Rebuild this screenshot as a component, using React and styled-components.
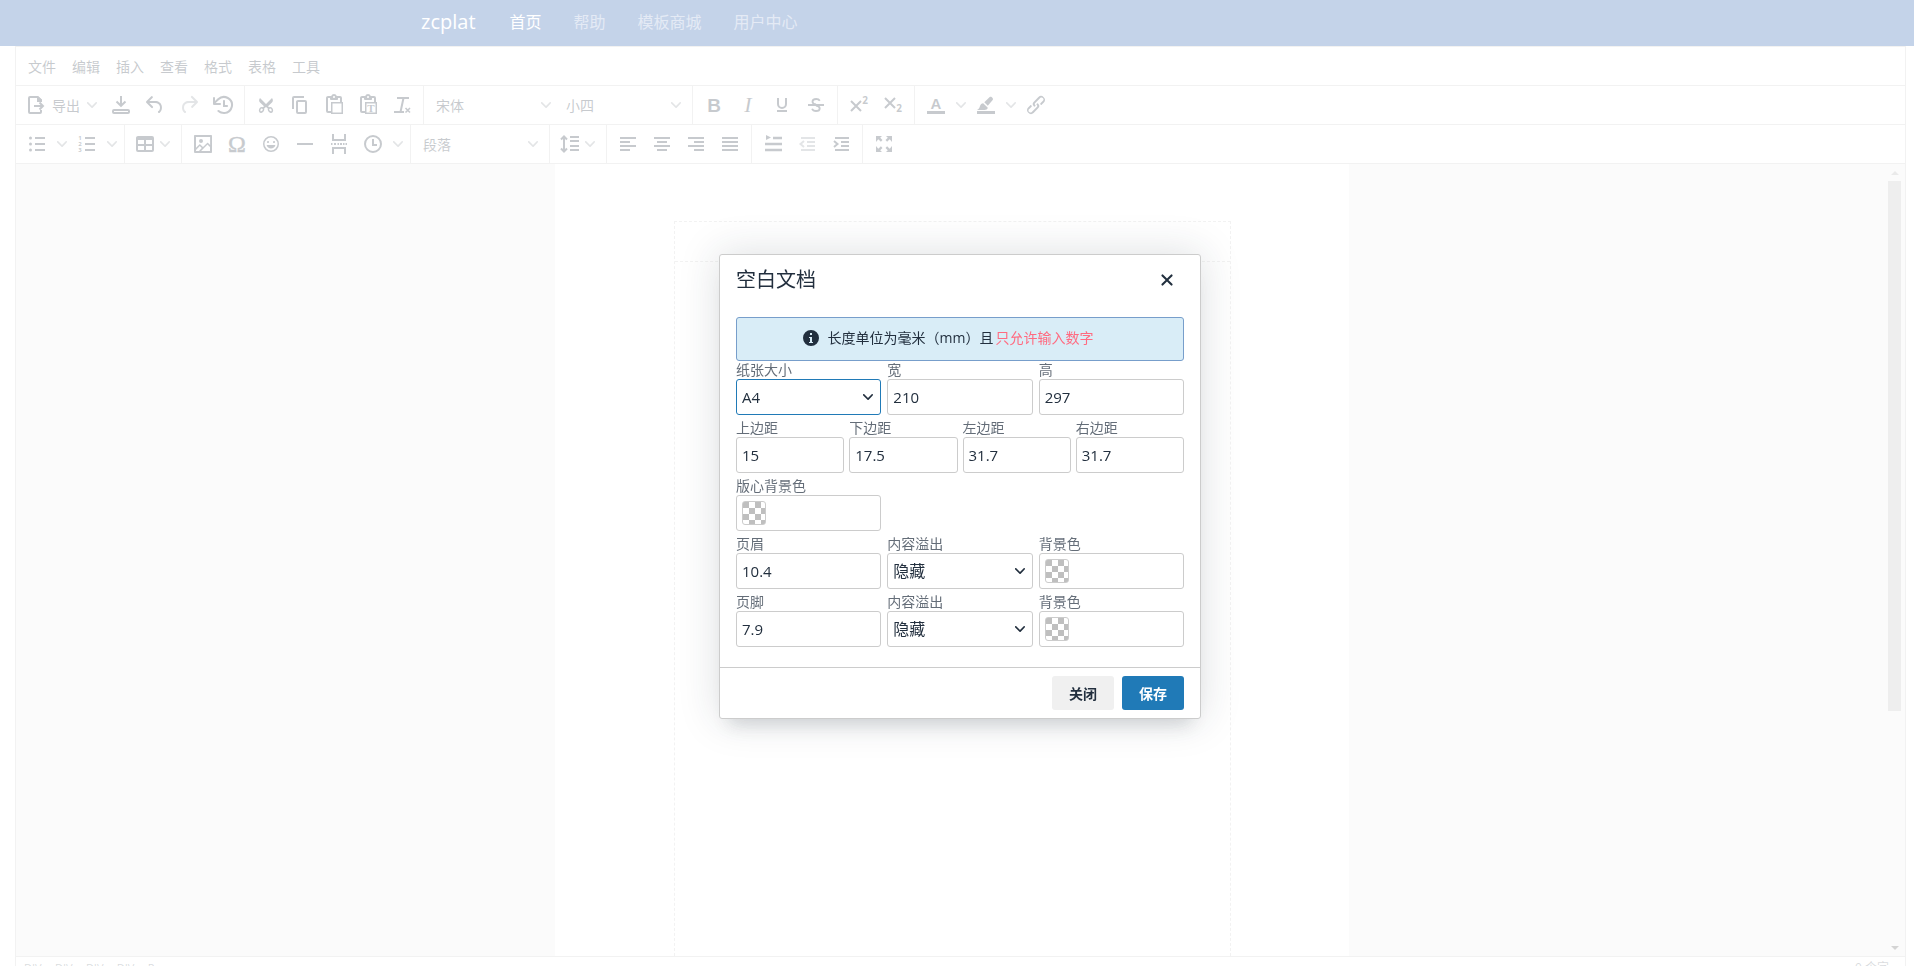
import styled, { createGlobalStyle, css } from 'styled-components';

const ink = '#222f3e';
const line = '#ccc';
const accent = '#207ab7';
const fontStack = "'Open Sans', 'Noto Sans CJK SC', sans-serif";

const GlobalStyle = createGlobalStyle`
  * {
    box-sizing: border-box;
  }
  body {
    margin: 0;
    overflow: hidden;
    background: #fff;
    color: ${ink};
    font-family: ${fontStack};
    font-size: 14px;
    line-height: 18px;
  }
  button,
  input,
  select {
    font-family: inherit;
    color: inherit;
    margin: 0;
  }
`;

const Page = styled.div`
  height: 100vh;
  overflow: hidden;
`;

const Navbar = styled.header`
  display: flex;
  align-items: center;
  height: 46px;
  padding: 0 0 2px 22%;
  background: #174fa7;
`;

const Brand = styled.a`
  margin-right: 18px;
  color: #fff;
  font-size: 20px;
  line-height: 30px;
  text-decoration: none;
`;

const NavLink = styled.a`
  padding: 0 16px;
  color: ${(props) => (props.$active ? '#fff' : 'rgba(255, 255, 255, 0.55)')};
  font-size: 16px;
  line-height: 24px;
  text-decoration: none;
`;

const Editor = styled.main`
  display: flex;
  flex-direction: column;
  height: calc(100vh - 30px);
  margin: 0 8px 0 15px;
  border: 1px solid ${line};
`;

const Menubar = styled.nav`
  display: flex;
  align-items: center;
  height: 38px;
  padding: 0 4px;
`;

const MenuButton = styled.button`
  height: 34px;
  padding: 0 8px;
  border: 0;
  background: none;
  font-size: 14px;
`;

const Toolbar = styled.div`
  display: flex;
  height: 39px;
  border-top: 1px solid ${line};
`;

const Group = styled.div`
  display: flex;
  align-items: center;
  padding: 0 4px;

  & + & {
    border-left: 1px solid ${line};
  }
`;

const ToolButton = styled.button`
  display: flex;
  align-items: center;
  justify-content: center;
  width: 34px;
  height: 34px;
  padding: 0;
  border: 0;
  background: none;
  font-size: 14px;

  &:disabled {
    color: rgba(34, 47, 62, 0.5);
  }
`;

const ArrowButton = styled(ToolButton)`
  width: 16px;
`;

const MenuToolButton = styled(ToolButton)`
  width: auto;
  padding: 0 4px;
`;

const ButtonText = styled.span`
  margin: 0 4px;
`;

const Arrow = styled.span`
  display: flex;
  justify-content: center;
  width: 16px;
  opacity: 0.5;
`;

const ToolSelectBox = styled.span`
  display: grid;
  grid-template-columns: 1fr 24px;
  align-items: center;
  width: 130px;
  height: 34px;

  select {
    grid-area: 1 / 1 / 2 / 3;
    height: 34px;
    padding: 0 8px;
    border: 0;
    background: none;
    appearance: none;
    font-size: 14px;
  }
  svg {
    grid-area: 1 / 2;
    justify-self: center;
    opacity: 0.5;
    pointer-events: none;
  }
`;

const Canvas = styled.section`
  display: flex;
  flex: 1;
  min-height: 0;
  border-top: 1px solid ${line};
  background: #f0f0f0;
`;

const PageArea = styled.div`
  display: flex;
  flex: 1;
  justify-content: center;
  overflow: hidden;
`;

const Sheet = styled.article`
  width: 794px;
  padding: 57px 118px 0 119px;
  background: #fff;
`;

const Margins = styled.div`
  height: 100%;
  border: 1px dashed ${line};
  border-bottom: 0;
`;

const PageHeader = styled.div`
  height: 40px;
  border-bottom: 1px dashed ${line};
`;

const Scrollbar = styled.div`
  display: flex;
  flex-direction: column;
  align-items: center;
  justify-content: space-between;
  width: 17px;
  padding: 7px 4px 6px 0;
`;

const Thumb = styled.div`
  width: 13px;
  height: 68%;
  margin: 6px 0 auto;
  background: #bbb;
`;

const ScrollArrow = styled.span`
  width: 0;
  height: 0;
  border: 4px solid transparent;
  border-top-width: ${(props) => (props.$up ? 0 : 4)}px;
  border-bottom-width: ${(props) => (props.$up ? 4 : 0)}px;
  border-${(props) => (props.$up ? 'bottom' : 'top')}-color: ${(props) =>
    props.$up ? '#aaa' : '#555'};
`;

const Statusbar = styled.footer`
  display: flex;
  justify-content: space-between;
  height: 25px;
  padding: 2px 16px 0 8px;
  border-top: 1px solid ${line};
  color: rgba(34, 47, 62, 0.7);
  font-size: 12px;
`;

const Path = styled.span`
  display: flex;
  gap: 5px;
  font-size: 11px;
`;

const Backdrop = styled.div`
  position: fixed;
  inset: 0;
  display: flex;
  align-items: center;
  justify-content: center;
  padding: 7px 0 0 6px;
  background: rgba(255, 255, 255, 0.75);
`;

const Dialog = styled.form`
  width: 482px;
  max-width: 95%;
  border: 1px solid ${line};
  border-radius: 3px;
  background: #fff;
  box-shadow:
    0 16px 16px -10px rgba(34, 47, 62, 0.15),
    0 0 40px 1px rgba(34, 47, 62, 0.15);
`;

const DialogHeader = styled.div`
  display: flex;
  align-items: center;
  justify-content: space-between;
  padding: 8px 16px 0;
`;

const DialogTitle = styled.h1`
  margin: 0;
  font-size: 20px;
  font-weight: 400;
  line-height: 26px;
`;

const DialogBody = styled.div`
  padding: 20px 16px;
`;

const Notice = styled.p`
  display: flex;
  align-items: center;
  justify-content: center;
  height: 44px;
  margin: 0;
  padding: 0 28px 2px 0;
  border: 1px solid #779ecb;
  border-radius: 3px;
  background: #d9edf7;

  svg {
    margin-right: 5px;
  }
`;

const Warning = styled.span`
  margin-left: 2px;
  color: #ff6b81;
`;

const Row = styled.div`
  display: grid;
  grid-template-columns: repeat(${(props) => props.$cols}, 1fr);
  gap: ${(props) => (props.$cols === 4 ? 5 : 6)}px;

  & + & {
    margin-top: 4px;
  }
`;

const FieldBox = styled.div`
  display: flex;
  flex-direction: column;
  min-width: 0;
`;

const Label = styled.label`
  color: rgba(34, 47, 62, 0.7);
  line-height: 18px;
  white-space: nowrap;
`;

const control = css`
  width: 100%;
  height: 36px;
  padding: 0 5px;
  border: 1px solid ${line};
  border-radius: 3px;
  outline: 0;
  background: #fff;
  font-size: 15px;
  line-height: 24px;
`;

const TextInput = styled.input`
  ${control}
`;

const SelectInput = styled.select`
  ${control}
  border-color: ${(props) => (props.$focused ? accent : line)};
  appearance: none;
  font-size: ${(props) => (props.$cjk ? 16 : 15)}px;
`;

const ControlWrap = styled.div`
  position: relative;
  display: flex;
  align-items: center;

  > svg {
    position: absolute;
    right: 8px;
    pointer-events: none;
  }
`;

const Swatch = styled.span`
  position: absolute;
  left: 6px;
  width: 24px;
  height: 24px;
  border: 1px solid ${line};
  border-radius: 3px;
  background: repeating-conic-gradient(#fff 0 25%, #bfbfbf 0 50%) 0 0 / 12px 12px;
`;

const DialogFooter = styled.div`
  display: flex;
  justify-content: flex-end;
  gap: 8px;
  padding: 8px 16px;
  border-top: 1px solid ${line};
`;

const Button = styled.button`
  height: 34px;
  padding: 0 17px;
  border: 0;
  border-radius: 3px;
  background: ${(props) => (props.$primary ? accent : '#f0f0f0')};
  color: ${(props) => (props.$primary ? '#fff' : ink)};
  font-size: 14px;
  font-weight: 700;
`;

const Svg = ({ size = 24, children }) => (
  <svg
    width={size}
    height={size}
    viewBox={`0 0 ${size} ${size}`}
    fill="currentColor"
    fillRule="evenodd"
    aria-hidden="true"
  >
    {children}
  </svg>
);

const Stroke = ({ d, width = 2, ...rest }) => (
  <path d={d} fill="none" stroke="currentColor" strokeWidth={width} {...rest} />
);

const Glyph = ({ family = 'Open Sans', ...rest }) => (
  <text textAnchor="middle" fontFamily={family} {...rest} />
);

const Chevron = () => (
  <Svg size={10}>
    <path d="M8.7 2.2c.3-.3.8-.3 1 0 .4.4.4.9 0 1.2L5.7 7.8c-.3.3-.9.3-1.2 0L.2 3.4a.8.8 0 0 1 0-1.2c.3-.3.8-.3 1.1 0L5 6l3.7-3.8Z" />
  </Svg>
);

const clipboard =
  'M18 9V5h-2v1c0 .6-.4 1-1 1H9a1 1 0 0 1-1-1V5H6v13h3V9h9ZM9 20H6a2 2 0 0 1-2-2V5c0-1.1.9-2 2-2h3.2A3 3 0 0 1 12 1a3 3 0 0 1 2.8 2H18a2 2 0 0 1 2 2v4h1v12H9v-1Zm1.5-9.5v9h9v-9h-9ZM12 3a1 1 0 0 0-1 1c0 .5.4 1 1 1s1-.5 1-1-.4-1-1-1Z';

const icons = {
  export: (
    <>
      <Stroke d="M17 9V7l-3.5-3H6a1 1 0 0 0-1 1v14a1 1 0 0 0 1 1h10a1 1 0 0 0 1-1v-2" />
      <path d="M13 3h1l4 4v2h-5V3Z" />
      <Stroke d="M10 13h8M15.5 9.500 19 13l-3.500 3.500" />
    </>
  ),
  download: (
    <>
      <Stroke d="M12 3v9M7.500 8.500 12 12.800l4.500-4.300" />
      <Stroke d="M5 17h14a1 1 0 0 1 1 1v1a1 1 0 0 1-1 1H5a1 1 0 0 1-1-1v-1a1 1 0 0 1 1-1Z" />
    </>
  ),
  undo: (
    <path d="M6.4 8H12c3.7 0 6.2 2 6.8 5.1.6 2.7-.4 5.6-2.3 6.8a1 1 0 0 1-1-1.8c1.1-.6 1.8-2.7 1.4-4.6-.5-2.1-2.1-3.5-4.9-3.5H6.4l3.3 3.3a1 1 0 1 1-1.4 1.4l-5-5a1 1 0 0 1 0-1.4l5-5a1 1 0 0 1 1.4 1.4L6.4 8Z" />
  ),
  redo: (
    <path d="M17.6 10H12c-2.8 0-4.4 1.4-4.9 3.5-.4 2 .3 4 1.4 4.6a1 1 0 1 1-1 1.8c-2-1.2-2.9-4.1-2.3-6.8.6-3 3-5.1 6.8-5.1h5.6l-3.3-3.3a1 1 0 1 1 1.4-1.4l5 5a1 1 0 0 1 0 1.4l-5 5a1 1 0 0 1-1.4-1.4l3.3-3.3Z" />
  ),
  history: (
    <>
      <path d="M17 13c0 .6-.4 1-1 1h-4V8c0-.6.4-1 1-1s1 .4 1 1v4h2c.6 0 1 .4 1 1Z" />
      <path d="M4.7 10H9a1 1 0 0 1 0 2H3a1 1 0 0 1-1-1V5a1 1 0 1 1 2 0v3l2.5-2.4a9.2 9.2 0 0 1 10.8-1.5A9 9 0 0 1 13.4 21c-2.4.1-4.7-.7-6.5-2.2a1 1 0 1 1 1.3-1.5 7.2 7.2 0 0 0 11.6-3.7 7 7 0 0 0-3.5-7.7A7.2 7.2 0 0 0 8 7L4.7 10Z" />
    </>
  ),
  cut: (
    <>
      <path d="M6 5l6 6 6-6c1.200 1.500 1.200 3 0 4.500l-4 3.800 2 1.700-1.300 1.300L12 14l-2.700 2.300L8 15l2-1.700-4-3.800C4.800 8 4.800 6.500 6 5Z" />
      <Stroke
        width={1.5}
        d="M7.700 14.700c1.600 0 2.300 1.200 1.600 2.700-.8 1.500-2.600 2.200-3.300 1.300-1-1.300 0-4 1.700-4ZM16.300 14.700c-1.600 0-2.300 1.200-1.600 2.700.8 1.500 2.600 2.200 3.300 1.300 1-1.300 0-4-1.700-4Z"
      />
    </>
  ),
  copy: (
    <path d="M16 3H6a2 2 0 0 0-2 2v11h2V5h10V3Zm1 4a2 2 0 0 1 2 2v10a2 2 0 0 1-2 2h-7a2 2 0 0 1-2-2V9c0-1.2.9-2 2-2h7Zm0 12V9h-7v10h7Z" />
  ),
  paste: <path d={clipboard} />,
  pasteText: (
    <>
      <path d={clipboard} />
      <Glyph x="15" y="19" fontSize="11" fontWeight="700" family="Liberation Serif">
        T
      </Glyph>
    </>
  ),
  clear: (
    <>
      <Stroke d="M7 5h12M13.500 5l-3 14M4 19h10" />
      <Stroke width={1.6} d="m15.500 15 4.500 4.500m0-4.500-4.500 4.500" />
    </>
  ),
  bold: (
    <Glyph x="12" y="19" fontSize="19" fontWeight="700" family="Liberation Sans">
      B
    </Glyph>
  ),
  italic: (
    <Glyph x="12" y="19" fontSize="22" fontStyle="italic" family="Liberation Serif">
      I
    </Glyph>
  ),
  underline: <Stroke d="M8 5v6a4 4 0 0 0 8 0V5M7 18h10" />,
  strike: (
    <>
      <Stroke
        width={1.8}
        d="M15.800 7.800C15 6.500 13.800 6 12.200 6 10 6 8.500 7 8.500 8.700c0 1.500 1.200 2.300 3.500 2.800M12 12.500c2.500.6 3.700 1.300 3.700 2.900 0 1.700-1.500 2.600-3.700 2.600-2 0-3.300-.7-3.900-2.300"
      />
      <Stroke d="M4 12h16" />
    </>
  ),
  superscript: (
    <>
      <Stroke d="m4 8 10 10M14 8 4 18" />
      <Glyph x="18" y="11" fontSize="10" fontWeight="700">
        2
      </Glyph>
    </>
  ),
  subscript: (
    <>
      <Stroke d="m4 5 10 10M14 5 4 15" />
      <Glyph x="18" y="19" fontSize="10" fontWeight="700">
        2
      </Glyph>
    </>
  ),
  textColor: (
    <>
      <path d="M3 18h18v3H3z" />
      <Glyph x="12" y="16" fontSize="15" fontWeight="700" family="Liberation Sans">
        A
      </Glyph>
    </>
  ),
  highlight: (
    <>
      <path d="M3 18h18v3H3z" />
      <path d="M3 17c2-1 2.500-2.200 3-4 .4-1.700 1.600-2.800 3.200-2.800l4.600 4.600c-.2 1.400-1.800 2.200-3.300 2.200H3ZM10.300 9.300l5.400-5.200c1.300-1.200 4.300 1.300 3 3l-4.900 5.600-3.500-3.400Z" />
    </>
  ),
  link: (
    <path d="M6.200 12.300a1 1 0 0 1 1.400 1.400l-2 2a2 2 0 1 0 2.600 2.800l4.800-4.800a1 1 0 0 0 0-1.400 1 1 0 1 1 1.400-1.300 2.900 2.900 0 0 1 0 4L9.600 20a3.900 3.900 0 0 1-5.500-5.500l2-2Zm11.600-.6a1 1 0 0 1-1.400-1.400l2-2a2 2 0 1 0-2.600-2.800L11 10.300a1 1 0 0 0 0 1.400A1 1 0 1 1 9.600 13a2.900 2.900 0 0 1 0-4L14.400 4a3.900 3.900 0 0 1 5.500 5.500l-2 2Z" />
  ),
  bullets: (
    <>
      <Stroke d="M10 6h10M10 12h10M10 18h10" />
      <circle cx="5.500" cy="6" r="1.500" />
      <circle cx="5.500" cy="12" r="1.500" />
      <circle cx="5.500" cy="18" r="1.500" />
    </>
  ),
  numbers: (
    <>
      <Stroke d="M10 6h10M10 12h10M10 18h10" />
      {[1, 2, 3].map((n) => (
        <Glyph key={n} x="5" y={n * 6 + 2} fontSize="6" fontWeight="700">
          {n}
        </Glyph>
      ))}
    </>
  ),
  table: (
    <path d="M19 4a2 2 0 0 1 2 2v12a2 2 0 0 1-2 2H5a2 2 0 0 1-2-2V6c0-1.1.9-2 2-2h14ZM5 14v4h6v-4H5Zm14 0h-6v4h6v-4Zm0-6h-6v4h6V8ZM5 12h6V8H5v4Z" />
  ),
  image: (
    <path d="m5 15.7 3.3-3.2c.3-.3.7-.3 1 0L12 15l4.1-4c.3-.4.8-.4 1 0l2 1.900V5H5v10.700ZM5 18V19h3l2.800-2.900-2-2L5 17.900Zm14-3-2.500-2.400-6.400 6.500H19v-4ZM4 3h16c.6 0 1 .4 1 1v16c0 .6-.4 1-1 1H4a1 1 0 0 1-1-1V4c0-.6.4-1 1-1Zm6 8a2 2 0 1 0 0-4 2 2 0 0 0 0 4Z" />
  ),
  omega: (
    <Glyph
      x="12"
      y="20"
      fontSize="24"
      family="Liberation Serif"
      stroke="currentColor"
      strokeWidth=".5"
    >
      Ω
    </Glyph>
  ),
  emoji: (
    <path d="M9 11c.6 0 1-.4 1-1s-.4-1-1-1a1 1 0 0 0-1 1c0 .6.4 1 1 1Zm6 0c.6 0 1-.4 1-1s-.4-1-1-1a1 1 0 0 0-1 1c0 .6.4 1 1 1Zm-3 5.5c2.1 0 4-1.5 4.4-3.5H7.6c.5 2 2.3 3.5 4.4 3.500ZM12 4a8 8 0 1 0 0 16 8 8 0 0 0 0-16Zm0 14.5a6.5 6.5 0 1 1 0-13 6.5 6.5 0 0 1 0 13Z" />
  ),
  rule: <path d="M4 11h16v2H4z" />,
  pageBreak: (
    <>
      <Stroke d="M6 2v6h12V2M6 22v-6h12v6" />
      <Stroke d="M4 12h1.500M7 12h2M10.500 12h1.500M13 12h2M16 12h1.500M18.500 12H20" />
    </>
  ),
  clock: (
    <>
      <circle cx="12" cy="12" r="8" fill="none" stroke="currentColor" strokeWidth="2" />
      <Stroke d="M12 7v6h4" />
    </>
  ),
  lineHeight: (
    <>
      <Stroke d="M12 5h9M12 9h9M12 14h9M12 18h9" />
      <Stroke d="M6 5v14M3 7.500 6 4.500l3 3M3 16.500l3 3 3-3" />
    </>
  ),
  alignLeft: <Stroke d="M4 6h16M4 10h10M4 14h16M4 18h10" />,
  alignCenter: <Stroke d="M4 6h16M7 10h10M4 14h16M7 18h10" />,
  alignRight: <Stroke d="M4 6h16M10 10h10M4 14h16M10 18h10" />,
  alignJustify: <Stroke d="M4 6h16M4 10h16M4 14h16M4 18h16" />,
  firstLine: (
    <>
      <Stroke d="M12 6h9M4 12h17M4 18h17" width={2.4} />
      <path d="m5 3 5 2.500L5 8V3Z" />
    </>
  ),
  outdent: (
    <>
      <Stroke d="M6 6h14M12 10h8M12 14h8M6 18h14" />
      <Stroke d="m9 9-3.500 3L9 15" />
    </>
  ),
  indent: (
    <>
      <Stroke d="M6 6h14M12 10h8M12 14h8M6 18h14" />
      <Stroke d="m5 9 3.500 3L5 15" />
    </>
  ),
  fullscreen: (
    <>
      <path d="M4 4h6L8.200 5.800l2.300 2.300-1.600 1.600-2.600-2.500L4 10V4ZM20 4v6l-2.300-2.800-2.600 2.500-1.600-1.600 2.300-2.300L14 4h6ZM4 20v-6l2.300 2.800 2.600-2.500 1.600 1.600-2.300 2.300L10 20H4ZM20 20h-6l1.800-1.800-2.300-2.300 1.600-1.600 2.600 2.500L20 14v6Z" />
    </>
  ),
};

const Tool = ({ icon, label, disabled }) => (
  <ToolButton type="button" aria-label={label} disabled={disabled}>
    <Svg>{icons[icon]}</Svg>
  </ToolButton>
);

const SplitTool = ({ icon, label }) => (
  <>
    <Tool icon={icon} label={label} />
    <ArrowButton type="button" aria-label={`${label}选项`}>
      <Arrow>
        <Chevron />
      </Arrow>
    </ArrowButton>
  </>
);

const MenuTool = ({ icon, label, text }) => (
  <MenuToolButton type="button" aria-label={label}>
    <Svg>{icons[icon]}</Svg>
    {text && <ButtonText>{text}</ButtonText>}
    <Arrow>
      <Chevron />
    </Arrow>
  </MenuToolButton>
);

const ToolSelect = ({ label, value }) => (
  <ToolSelectBox>
    <select aria-label={label}>
      <option>{value}</option>
    </select>
    <Chevron />
  </ToolSelectBox>
);

const TextField = ({ id, label, value }) => (
  <FieldBox>
    <Label htmlFor={id}>{label}</Label>
    <TextInput id={id} type="text" defaultValue={value} />
  </FieldBox>
);

const SelectField = ({ id, label, value, focused, cjk }) => (
  <FieldBox>
    <Label htmlFor={id}>{label}</Label>
    <ControlWrap>
      <SelectInput id={id} $focused={focused} $cjk={cjk}>
        <option>{value}</option>
      </SelectInput>
      <Chevron />
    </ControlWrap>
  </FieldBox>
);

const ColorField = ({ id, label }) => (
  <FieldBox>
    <Label htmlFor={id}>{label}</Label>
    <ControlWrap>
      <TextInput id={id} type="text" />
      <Swatch />
    </ControlWrap>
  </FieldBox>
);

const menus = ['文件', '编辑', '插入', '查看', '格式', '表格', '工具'];
const links = ['首页', '帮助', '模板商城', '用户中心'];

const App = () => (
  <Page>
    <GlobalStyle />
    <Navbar>
      <Brand href="#">zcplat</Brand>
      {links.map((link, i) => (
        <NavLink key={link} href="#" $active={i === 0}>
          {link}
        </NavLink>
      ))}
    </Navbar>
    <Editor>
      <Menubar>
        {menus.map((menu) => (
          <MenuButton key={menu} type="button">
            {menu}
          </MenuButton>
        ))}
      </Menubar>
      <Toolbar>
        <Group>
          <MenuTool icon="export" label="导出" text="导出" />
          <Tool icon="download" label="下载" />
          <Tool icon="undo" label="撤销" />
          <Tool icon="redo" label="重做" disabled />
          <Tool icon="history" label="恢复草稿" />
        </Group>
        <Group>
          <Tool icon="cut" label="剪切" />
          <Tool icon="copy" label="复制" />
          <Tool icon="paste" label="粘贴" />
          <Tool icon="pasteText" label="粘贴为文本" />
          <Tool icon="clear" label="清除格式" />
        </Group>
        <Group>
          <ToolSelect label="字体" value="宋体" />
          <ToolSelect label="字号" value="小四" />
        </Group>
        <Group>
          <Tool icon="bold" label="粗体" />
          <Tool icon="italic" label="斜体" />
          <Tool icon="underline" label="下划线" />
          <Tool icon="strike" label="删除线" />
        </Group>
        <Group>
          <Tool icon="superscript" label="上标" />
          <Tool icon="subscript" label="下标" />
        </Group>
        <Group>
          <SplitTool icon="textColor" label="文字颜色" />
          <SplitTool icon="highlight" label="背景色" />
          <Tool icon="link" label="链接" />
        </Group>
      </Toolbar>
      <Toolbar>
        <Group>
          <SplitTool icon="bullets" label="项目符号" />
          <SplitTool icon="numbers" label="编号列表" />
        </Group>
        <Group>
          <MenuTool icon="table" label="表格" />
        </Group>
        <Group>
          <Tool icon="image" label="图片" />
          <Tool icon="omega" label="特殊字符" />
          <Tool icon="emoji" label="表情" />
          <Tool icon="rule" label="水平线" />
          <Tool icon="pageBreak" label="分页符" />
          <SplitTool icon="clock" label="日期时间" />
        </Group>
        <Group>
          <ToolSelect label="段落格式" value="段落" />
        </Group>
        <Group>
          <MenuTool icon="lineHeight" label="行高" />
        </Group>
        <Group>
          <Tool icon="alignLeft" label="左对齐" />
          <Tool icon="alignCenter" label="居中" />
          <Tool icon="alignRight" label="右对齐" />
          <Tool icon="alignJustify" label="两端对齐" />
        </Group>
        <Group>
          <Tool icon="firstLine" label="首行缩进" />
          <Tool icon="outdent" label="减少缩进" disabled />
          <Tool icon="indent" label="增加缩进" />
        </Group>
        <Group>
          <Tool icon="fullscreen" label="全屏" />
        </Group>
      </Toolbar>
      <Canvas>
        <PageArea>
          <Sheet>
            <Margins>
              <PageHeader />
            </Margins>
          </Sheet>
        </PageArea>
        <Scrollbar>
          <ScrollArrow $up />
          <Thumb />
          <ScrollArrow />
        </Scrollbar>
      </Canvas>
      <Statusbar>
        <Path>
          {['DIV', 'DIV', 'DIV', 'DIV'].map((tag, i) => (
            <Path key={i}>
              <span>{tag}</span>
              <span>›</span>
            </Path>
          ))}
          <span>P</span>
        </Path>
        <span>0 个字</span>
      </Statusbar>
    </Editor>
    <Backdrop>
      <Dialog role="dialog" aria-labelledby="dialog-title">
        <DialogHeader>
          <DialogTitle id="dialog-title">空白文档</DialogTitle>
          <ToolButton type="button" aria-label="关闭对话框">
            <Svg>
              <path d="M17.3 8.2 13.4 12l3.9 3.8a1 1 0 0 1-1.5 1.5L12 13.4l-3.8 3.9a1 1 0 0 1-1.5-1.5l3.9-3.8-3.9-3.8a1 1 0 0 1 1.5-1.5l3.8 3.9 3.8-3.9a1 1 0 0 1 1.5 1.5Z" />
            </Svg>
          </ToolButton>
        </DialogHeader>
        <DialogBody>
          <Notice>
            <Svg>
              <path d="M12 4a8 8 0 1 1 0 16 8 8 0 0 1 0-16Zm-1 3v2h2V7h-2Zm3 10v-1h-1v-5h-3v1h1v4h-1v1h4Z" />
            </Svg>
            长度单位为毫米（mm）且
            <Warning>只允许输入数字</Warning>
          </Notice>
          <Row $cols={3}>
            <SelectField id="paper" label="纸张大小" value="A4" focused />
            <TextField id="width" label="宽" value="210" />
            <TextField id="height" label="高" value="297" />
          </Row>
          <Row $cols={4}>
            <TextField id="top" label="上边距" value="15" />
            <TextField id="bottom" label="下边距" value="17.5" />
            <TextField id="left" label="左边距" value="31.7" />
            <TextField id="right" label="右边距" value="31.7" />
          </Row>
          <Row $cols={3}>
            <ColorField id="core-color" label="版心背景色" />
          </Row>
          <Row $cols={3}>
            <TextField id="header" label="页眉" value="10.4" />
            <SelectField id="header-overflow" label="内容溢出" value="隐藏" cjk />
            <ColorField id="header-color" label="背景色" />
          </Row>
          <Row $cols={3}>
            <TextField id="footer" label="页脚" value="7.9" />
            <SelectField id="footer-overflow" label="内容溢出" value="隐藏" cjk />
            <ColorField id="footer-color" label="背景色" />
          </Row>
        </DialogBody>
        <DialogFooter>
          <Button type="button">关闭</Button>
          <Button type="button" $primary>
            保存
          </Button>
        </DialogFooter>
      </Dialog>
    </Backdrop>
  </Page>
);

export default App;
